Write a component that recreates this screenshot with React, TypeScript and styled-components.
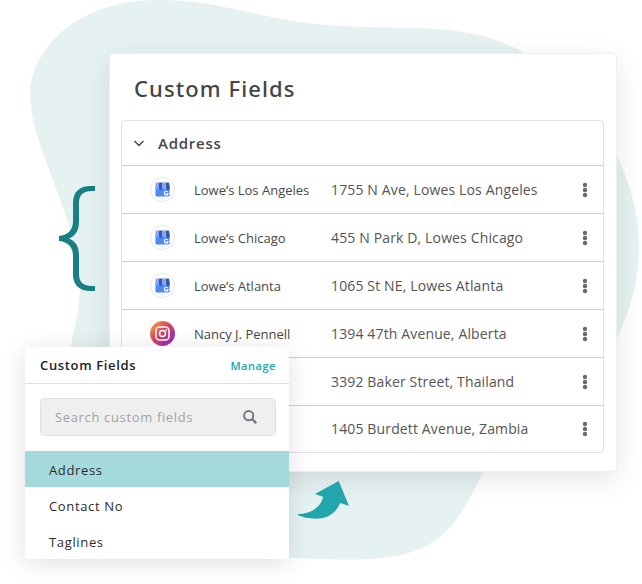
import React, { useState } from "react";
import styled, { createGlobalStyle } from "styled-components";

const GlobalStyle = createGlobalStyle`
  *, *::before, *::after { box-sizing: border-box; }
  body {
    margin: 0;
    background: #fff;
    font-family: "Open Sans", "Noto Sans", sans-serif;
    color: #484848;
  }
  button, input { font: inherit; color: inherit; letter-spacing: inherit; }
  h1, h2, ul { margin: 0; padding: 0; }
`;

const Stage = styled.main`
  position: relative;
  display: flex;
  align-items: flex-start;
  gap: 14px;
  padding: 53px 25px 112px 59px;
  overflow: hidden;
`;

const Backdrop = styled.svg`
  position: absolute;
  inset: 0;
  width: 100%;
  height: 100%;
  z-index: -1;
`;

const Brace = styled.svg`
  flex: none;
  margin-top: 133px;
`;

const Card = styled.section`
  flex: 1;
  min-width: 0;
  padding: 0 12px 18px 11px;
  border: 1px solid #efefef;
  border-radius: 4px;
  background: #fff;
  box-shadow: 0 8px 28px rgba(0, 0, 0, 0.1);
`;

const CardTitle = styled.h1`
  padding: 19px 0 17px 13px;
  font-family: "Noto Sans", "Open Sans", sans-serif;
  font-size: 22px;
  line-height: 30px;
  font-weight: 500;
  letter-spacing: 0.05em;
  color: #444;
`;

const Panel = styled.div`
  border: 1px solid #e0e0e0;
  border-radius: 4px;
`;

const SectionToggle = styled.button`
  display: flex;
  align-items: center;
  gap: 13px;
  width: 100%;
  height: 44px;
  padding: 2px 11px;
  border: 0;
  background: none;
  font-size: 15px;
  font-weight: 600;
  letter-spacing: 0.05em;
  text-align: left;
`;

const FieldTable = styled.table`
  width: 100%;
  table-layout: fixed;
  border-collapse: collapse;
`;

const Row = styled.tr`
  height: 48px;
  border-top: 1px solid #cdcdcd;
  &:last-child { height: 46px; }
`;

const NameCell = styled.td`
  width: 209px;
  padding: 0 0 0 28px;
`;

const Profile = styled.div`
  display: flex;
  align-items: center;
  gap: 19px;
  font-size: 13px;
  white-space: nowrap;
`;

const AddressCell = styled.td`
  padding: 0;
  font-size: 14px;
  letter-spacing: 0.01em;
  color: #555;
  white-space: nowrap;
`;

const MenuCell = styled.td`
  width: 36px;
  padding: 0;
`;

const MenuButton = styled.button`
  display: flex;
  justify-content: center;
  width: 100%;
  padding: 8px 0;
  border: 0;
  background: none;
  color: #6b6b6b;
`;

const Popup = styled.aside`
  position: absolute;
  left: 25px;
  top: 347px;
  width: 264px;
  border-radius: 4px;
  background: #fff;
  box-shadow: 0 4px 24px rgba(0, 0, 0, 0.13);
  overflow: hidden;
`;

const PopupHeader = styled.header`
  display: flex;
  align-items: center;
  justify-content: space-between;
  height: 37px;
  padding: 0 13px 0 15px;
  border-bottom: 1px solid #dedede;
`;

const PopupTitle = styled.h2`
  font-size: 13px;
  font-weight: 600;
  letter-spacing: 0.05em;
  color: #222;
`;

const ManageLink = styled.a`
  font-size: 11px;
  font-weight: 600;
  letter-spacing: 0.05em;
  color: #22a5ad;
  text-decoration: none;
`;

const SearchBox = styled.label`
  display: flex;
  align-items: center;
  height: 38px;
  margin: 14px 13px 15px 15px;
  padding: 0 18px 0 14px;
  border: 1px solid #e0e0e0;
  border-radius: 4px;
  background: #efefef;
  color: #74797c;
`;

const SearchInput = styled.input`
  flex: 1;
  min-width: 0;
  padding: 0;
  border: 0;
  outline: 0;
  background: none;
  font-size: 13px;
  letter-spacing: 0.05em;
  &::placeholder { color: #a3a3a3; opacity: 1; }
`;

const OptionList = styled.ul`
  list-style: none;
`;

const Option = styled.button<{ $selected: boolean }>`
  display: block;
  width: 100%;
  padding: 9px 24px 7px;
  border: 0;
  background: ${(p) => (p.$selected ? "#a5dadc" : "transparent")};
  font-size: 13px;
  line-height: 20px;
  letter-spacing: 0.05em;
  text-align: left;
  color: #2b2b2b;
`;

const Arrow = styled.svg`
  position: absolute;
  left: 298px;
  top: 481px;
`;

const StoreIcon = () => (
  <svg width="25" height="25" viewBox="0 0 25 25" aria-hidden="true">
    <circle cx="12.5" cy="12.5" r="12" fill="#fff" stroke="#e4e4e8" />
    <path d="M5.500 11h14v7.500a1 1 0 0 1-1 1h-12a1 1 0 0 1-1-1z" fill="#4a88f2" />
    <path d="M6 5.500H9.200L8.800 11a1.900 1.900 0 0 1-3.800 0z" fill="#7ba8f3" />
    <path d="M9.200 5.500h3.300V11a1.850 1.850 0 0 1-3.700 0z" fill="#3f51b5" />
    <path d="M12.500 5.500H15.800l.4 5.500a1.850 1.850 0 0 1-3.700 0z" fill="#7ba8f3" />
    <path d="M15.800 5.500H19l1 5.500a1.900 1.900 0 0 1-3.800 0z" fill="#3f51b5" />
    <path d="M17.600 14.900a1.900 1.900 0 1 0 .5 1.700h-1.700" fill="none" stroke="#fff" strokeWidth="1.100" />
  </svg>
);

const InstagramIcon = () => (
  <svg width="25" height="25" viewBox="0 0 25 25" aria-hidden="true">
    <defs>
      <linearGradient id="insta" x1="0.1" y1="0.1" x2="0.9" y2="0.9">
        <stop offset="0" stopColor="#f09a4c" />
        <stop offset="0.45" stopColor="#d9425f" />
        <stop offset="1" stopColor="#8c2bc4" />
      </linearGradient>
    </defs>
    <circle cx="12.500" cy="12.500" r="12.500" fill="url(#insta)" />
    <g fill="none" stroke="#fff" strokeWidth="1.500">
      <rect x="6" y="6" width="13" height="13" rx="3.500" />
      <circle cx="12.500" cy="12.500" r="3" />
    </g>
    <circle cx="16.300" cy="8.800" r="0.900" fill="#fff" />
  </svg>
);

const rows = [
  { name: "Lowe’s Los Angeles", icon: "store", address: "1755 N Ave, Lowes Los Angeles" },
  { name: "Lowe’s Chicago", icon: "store", address: "455 N Park D, Lowes Chicago" },
  { name: "Lowe’s Atlanta", icon: "store", address: "1065 St NE, Lowes Atlanta" },
  { name: "Nancy J. Pennell", icon: "instagram", address: "1394 47th Avenue, Alberta" },
  { name: "", icon: "", address: "3392 Baker Street, Thailand" },
  { name: "", icon: "", address: "1405 Burdett Avenue, Zambia" },
];

const options = ["Address", "Contact No", "Taglines"];

export default function App() {
  const [open, setOpen] = useState(true);
  const [selected, setSelected] = useState("Address");

  return (
    <>
      <GlobalStyle />
      <Stage>
        <Backdrop viewBox="0 0 642 584" preserveAspectRatio="xMinYMin meet" aria-hidden="true">
          <path
            d="M158 0C228 0 262 22 340 26C420 30 470 22 525 53C570 78 597 108 617 155C646 215 648 275 617 340C560 390 515 412 484 472C456 525 445 560 352 560C310 560 300 558 270 558C150 540 50 450 71 347C76 318 82 300 79 275C72 205 30 145 30 92C32 50 76 0 158 0Z"
            fill="#e6f2f2"
          />
        </Backdrop>

        <Brace width="36" height="105" viewBox="0 0 36 105" aria-hidden="true">
          <path
            d="M36 0H32C20 0 14 6 14 17V35C14 44 9 49 0 50V55C9 56 14 61 14 70V88C14 99 20 105 32 105H36V100H33C24 100 20 96 20 88V69C20 60 16 55 10 52.500C16 50 20 45 20 36V17C20 9 24 5 33 5H36Z"
            fill="#197f84"
          />
        </Brace>

        <Card>
          <CardTitle>Custom Fields</CardTitle>
          <Panel>
            <SectionToggle type="button" aria-expanded={open} onClick={() => setOpen(!open)}>
              <svg width="12" height="12" viewBox="0 0 12 12" aria-hidden="true">
                <path d="M1.500 4L6 8.500L10.500 4" fill="none" stroke="#484848" strokeWidth="1.500" />
              </svg>
              Address
            </SectionToggle>
            {open && (
              <FieldTable aria-label="Address">
                <tbody>
                  {rows.map((row) => (
                    <Row key={row.address}>
                      <NameCell>
                        <Profile>
                          {row.icon === "store" && <StoreIcon />}
                          {row.icon === "instagram" && <InstagramIcon />}
                          {row.name}
                        </Profile>
                      </NameCell>
                      <AddressCell>{row.address}</AddressCell>
                      <MenuCell>
                        <MenuButton type="button" aria-label={`Options for ${row.address}`}>
                          <svg width="6" height="16" viewBox="0 0 6 16" fill="currentColor" aria-hidden="true">
                            <circle cx="3" cy="3" r="2.200" />
                            <circle cx="3" cy="8" r="2.200" />
                            <circle cx="3" cy="13" r="2.200" />
                          </svg>
                        </MenuButton>
                      </MenuCell>
                    </Row>
                  ))}
                </tbody>
              </FieldTable>
            )}
          </Panel>
        </Card>

        <Arrow width="51" height="38" viewBox="24 33 153 114" aria-hidden="true">
          <path
            d="M146 33L177 108L151 99C137 130 112 146 78 146C55 146 38 142 24 136V132C60 132 90 115 100 81L75 72Z"
            fill="#22a5ad"
          />
        </Arrow>

        <Popup>
          <PopupHeader>
            <PopupTitle>Custom Fields</PopupTitle>
            <ManageLink href="#manage">Manage</ManageLink>
          </PopupHeader>
          <SearchBox>
            <SearchInput type="text" aria-label="Search custom fields" placeholder="Search custom fields" />
            <svg width="14" height="14" viewBox="0 0 14 14" fill="none" stroke="currentColor" aria-hidden="true">
              <circle cx="5.700" cy="5.700" r="4.600" strokeWidth="2" />
              <path d="M9 9L13.200 13.200" strokeWidth="2.400" />
            </svg>
          </SearchBox>
          <OptionList>
            {options.map((option) => (
              <li key={option}>
                <Option
                  type="button"
                  $selected={option === selected}
                  aria-pressed={option === selected}
                  onClick={() => setSelected(option)}
                >
                  {option}
                </Option>
              </li>
            ))}
          </OptionList>
        </Popup>
      </Stage>
    </>
  );
}
